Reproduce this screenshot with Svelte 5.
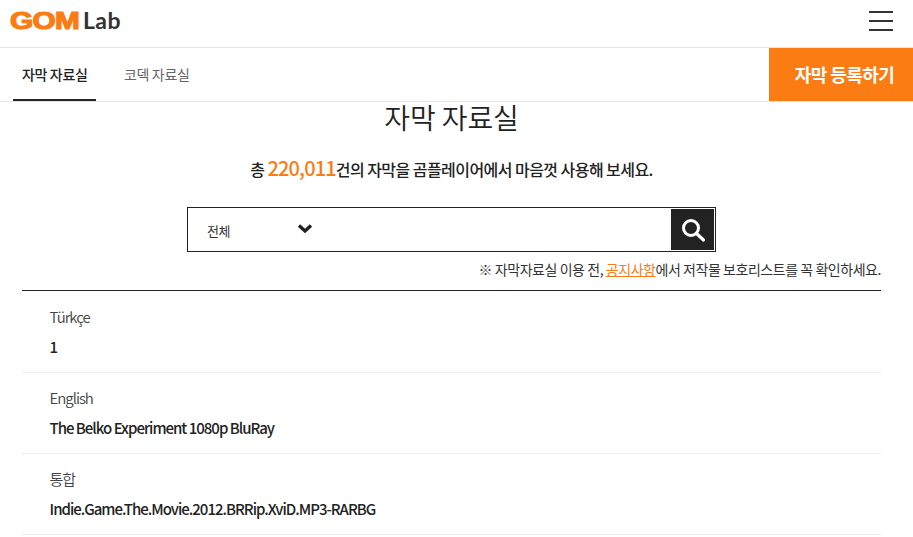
<script>
  const rows = [
    { lang: 'Türkçe', title: '1' },
    { lang: 'English', title: 'The Belko Experiment 1080p BluRay' },
    { lang: '통합', title: 'Indie.Game.The.Movie.2012.BRRip.XviD.MP3-RARBG' }
  ];
</script>

<div class="page">
  <header class="top">
    <a class="logo" href="#top"><span class="gom">GOM</span><span class="lab">Lab</span></a>
    <button class="burger" aria-label="메뉴"><i></i><i></i><i></i></button>
  </header>

  <nav class="tabs">
    <a class="tab active" href="#top">자막 자료실</a>
    <a class="tab" href="#top">코덱 자료실</a>
    <a class="register" href="#top">자막 등록하기</a>
  </nav>

  <main>
    <h1>자막 자료실</h1>
    <p class="lead">총 <strong>220,011</strong>건의 자막을 곰플레이어에서 마음껏 사용해 보세요.</p>

    <form class="search">
      <div class="select">
        <span>전체</span>
        <svg width="16" height="11" viewBox="0 0 16 11"><path d="M2 2.5 8 8l6-5.5" fill="none" stroke="#222" stroke-width="3.4"/></svg>
      </div>
      <button class="go" aria-label="검색">
        <svg width="24" height="24" viewBox="0 0 24 24" fill="none" stroke="#fff"><circle cx="10" cy="10" r="7.5" stroke-width="3"/><path d="m15.5 15.5 7 6.5" stroke-width="3.2" stroke-linecap="round"/></svg>
      </button>
    </form>

    <p class="note">※ 자막자료실 이용 전, <a href="#top">공지사항</a>에서 저작물 보호리스트를 꼭 확인하세요.</p>

    <ul class="list">
      {#each rows as row}
        <li>
          <div class="lang">{row.lang}</div>
          <div class="title">{row.title}</div>
        </li>
      {/each}
    </ul>
  </main>
</div>

<style>
  :global(body) {
    margin: 0;
    background: #fff;
    overflow: hidden;
  }
  .page {
    font-family: "Noto Sans CJK KR", "Noto Sans", sans-serif;
    color: #222;
    width: 913px;
    height: 537px;
    overflow: hidden;
  }
  a { text-decoration: none; color: inherit; }

  .top {
    height: 47px;
    border-bottom: 1px solid #e5e5e5;
    display: flex;
    align-items: center;
    justify-content: space-between;
    padding: 0 20px 0 10px;
  }
  .logo { display: flex; align-items: baseline; gap: 4px; margin-top: -6px; }
  .gom {
    font-family: "Liberation Sans", sans-serif;
    font-weight: 700;
    font-size: 24px;
    line-height: 28px;
    color: #fb7c12;
    -webkit-text-stroke: 1.2px #fb7c12;
    transform: scaleX(1.24);
    transform-origin: left;
    width: 69px;
    letter-spacing: -0.5px;
  }
  .lab {
    font-family: "Lato", sans-serif;
    font-weight: 700;
    font-size: 23px;
    line-height: 28px;
    color: #333;
    letter-spacing: 0.4px;
  }
  .burger {
    width: 24px;
    height: 20px;
    padding: 0;
    border: 0;
    background: none;
    display: flex;
    flex-direction: column;
    justify-content: space-between;
    margin-top: -6px;
  }
  .burger i { display: block; height: 2px; background: #333; }

  .tabs {
    height: 53px;
    border-bottom: 1px solid #e5e5e5;
    display: flex;
    padding-left: 13px;
  }
  .tab {
    font-size: 14px;
    color: #666;
    letter-spacing: -0.35px;
    line-height: 53px;
    height: 53px;
    box-sizing: border-box;
    padding: 0 9px;
    width: 83px;
    margin-right: 19px;
    white-space: nowrap;
  }
  .tab.active {
    color: #222;
    font-weight: 500;
    border-bottom: 2px solid #222;
  }
  .register {
    margin-left: auto;
    width: 144px;
    height: 53px;
    box-sizing: border-box;
    padding-left: 7px;
    background: #fb7c12;
    color: #fff;
    font-size: 18px;
    font-weight: 700;
    letter-spacing: -0.55px;
    line-height: 52px;
    text-align: center;
  }

  main { padding: 0 32px 0 22px; }
  h1 {
    margin: -2px 0 0;
    font-size: 28px;
    font-weight: 350;
    line-height: 34px;
    text-align: center;
    letter-spacing: -0.1px;
    color: #222;
  }
  .lead {
    margin: 17px 0 0;
    height: 34px;
    font-size: 16px;
    font-weight: 500;
    line-height: 34px;
    text-align: center;
    letter-spacing: -0.55px;
    color: #222;
  }
  .lead strong {
    font-size: 20px;
    font-weight: 500;
    color: #fb7c12;
    letter-spacing: -0.85px;
  }
  .search {
    margin: 22px 0 0 165px;
    width: 529px;
    height: 45px;
    box-sizing: border-box;
    border: 1px solid #222;
    display: flex;
    align-items: center;
    justify-content: space-between;
    padding-right: 1px;
  }
  .select {
    display: flex;
    align-items: center;
    padding-left: 19px;
    font-size: 13px;
    letter-spacing: -0.5px;
    color: #333;
  }
  .select span { width: 90px; margin-top: 2px; }
  .select svg { margin-top: -3px; }
  .go {
    width: 43px;
    height: 41px;
    padding: 0;
    border: 0;
    background: #222;
    display: flex;
    align-items: center;
    justify-content: center;
  }
  .note {
    margin: 7px 0 0;
    font-size: 14px;
    line-height: 20px;
    text-align: right;
    letter-spacing: -0.45px;
    color: #333;
  }
  .note a { color: #fb7c12; text-decoration: underline; }
  .list {
    list-style: none;
    margin: 11px 0 0;
    padding: 1px 0 0;
    border-top: 1px solid #222;
    width: 859px;
  }
  .list li {
    height: 81px;
    box-sizing: border-box;
    border-bottom: 1px solid #eee;
    padding: 13px 0 0 27.5px;
  }
  .lang {
    font-size: 15px;
    font-weight: 350;
    line-height: 24px;
    letter-spacing: -1px;
    color: #444;
  }
  .title {
    margin-top: 6px;
    font-size: 15px;
    font-weight: 500;
    line-height: 24px;
    letter-spacing: -1px;
    color: #222;
  }
</style>
